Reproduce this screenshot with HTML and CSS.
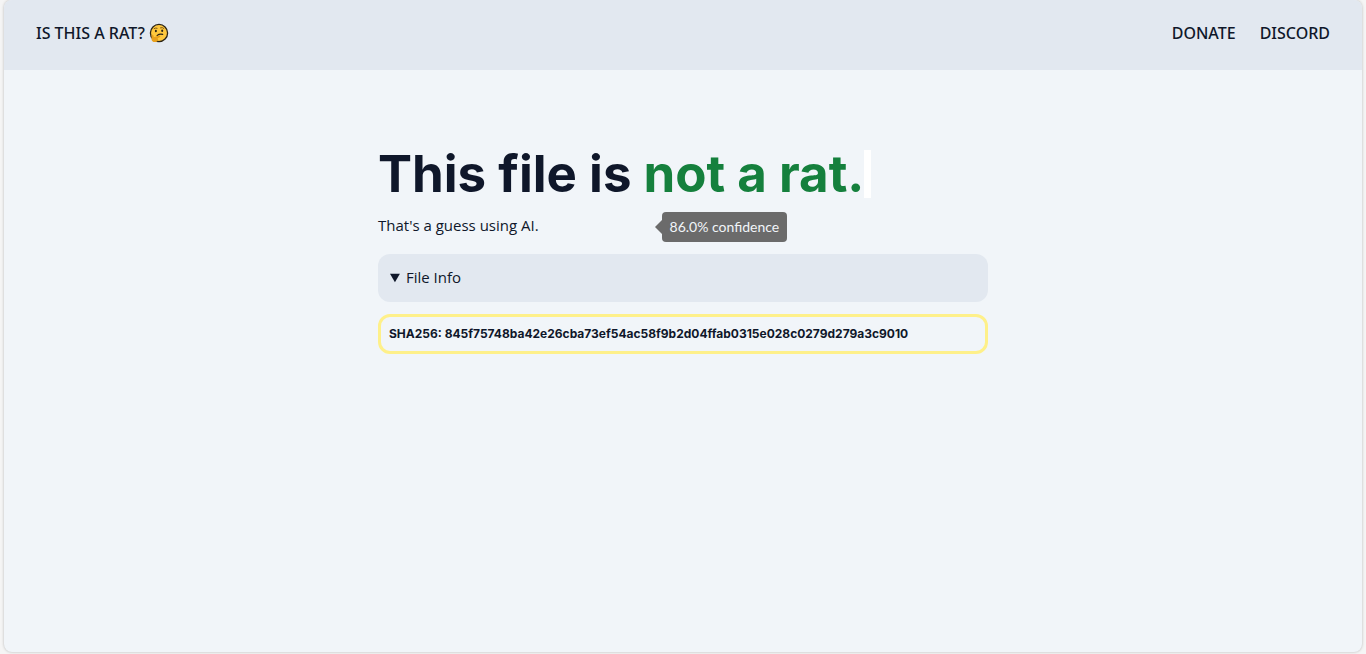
FILE: index.html
```html
<!DOCTYPE html>
<html lang="en">
<head>
<meta charset="utf-8">
<meta name="viewport" content="width=device-width, initial-scale=1">
<title>Is this a rat?</title>
<link rel="stylesheet" href="styles.css">
</head>
<body>
<div class="page">
  <header class="topbar">
    <a class="brand" href="#">IS THIS A RAT?
      <svg class="emoji" viewBox="0 0 20 20" role="img" aria-label="Thinking face">
        <circle cx="10" cy="10" r="8.6" fill="#ffc83d" stroke="#2b2417" stroke-width="1.3"/>
        <path d="M5.100 5.600q1.400-1 3-.4M11.500 4.800q2.200-.8 3.400.6" fill="none" stroke="#6b4a10" stroke-width=".9" stroke-linecap="round"/>
        <ellipse cx="6.900" cy="8" rx="1" ry="1.300" fill="#2b2417"/>
        <ellipse cx="13.200" cy="7.800" rx="1" ry="1.300" fill="#2b2417"/>
        <path d="M8.100 12.400q2.600-1.800 5.600-1" fill="none" stroke="#2b2417" stroke-width="1.200" stroke-linecap="round"/>
        <path d="M2.500 12.800c0-1.400 1.800-1.400 2 0l.3 1.400 5.200-1.600c1.400-.3 1.800 1.200.7 1.700l-2.200 1c1 .6.8 1.600.2 2.200-.3 1.200-1.300 1.600-2.600 1.600-2.400 0-3.600-1.200-3.600-3.200z" fill="#e8a01c"/>
      </svg>
    </a>
    <nav class="links">
      <a href="#donate">DONATE</a>
      <a href="#discord">DISCORD</a>
    </nav>
  </header>
  <main class="result">
    <h1 class="verdict">This file is <span class="rating" aria-describedby="confidence">not a rat.<span class="tooltip" id="confidence" role="tooltip">86.0% confidence</span></span><span class="caret"></span></h1>
    <p class="note">That's a guess using AI.</p>
    <details class="info" open>
      <summary class="info-title">File Info</summary>
      <p class="hash">SHA256: 845f75748ba42e26cba73ef54ac58f9b2d04ffab0315e028c0279d279a3c9010</p>
    </details>
  </main>
</div>
</body>
</html>
```
FILE: styles.css
```css
* {
  box-sizing: border-box;
}

body {
  margin: 0;
  min-height: 100vh;
  display: flex;
  padding: 0 4px 2px;
  background: #f5f5f5;
  color: #0f172a;
  font: 15px/24px "Open Sans", "Noto Sans", sans-serif;
}

.page {
  flex: 1;
  border-radius: 8px;
  overflow: hidden;
  background: #f1f5f9;
  box-shadow: 0 0 3px rgba(0, 0, 0, 0.25);
}

.topbar {
  display: flex;
  justify-content: space-between;
  align-items: center;
  padding: 21px 32px 25px;
  background: #e2e8f0;
  font: 500 16px/24px "Noto Sans", sans-serif;
}

.topbar a {
  color: inherit;
  text-decoration: none;
}

.brand {
  display: flex;
  align-items: center;
  gap: 4px;
}

.emoji {
  width: 20px;
  height: 20px;
}

.links {
  display: flex;
  gap: 24px;
}

.result {
  max-width: 642px;
  margin: 0 auto;
  padding: 80px 16px;
}

.verdict {
  margin: 0;
  font: 700 51px/48px Inter, sans-serif;
}

.rating {
  position: relative;
  color: #15803d;
}

.caret {
  display: inline-block;
  width: 7px;
  height: 48px;
  vertical-align: top;
  background: #ffffff;
}

.tooltip {
  position: absolute;
  top: 69px;
  left: 18px;
  padding: 0 8px;
  border-radius: 4px;
  background: #6b6b6b;
  color: #f1f5f9;
  font: 400 14px/30px Lato, sans-serif;
  white-space: nowrap;
}

.tooltip::before {
  content: "";
  position: absolute;
  top: 8px;
  left: -7px;
  border: 7px solid transparent;
  border-left-width: 0;
  border-right-color: #6b6b6b;
}

.note {
  margin: 15px 0 17px;
}

.info-title {
  padding: 11px 12px 13px;
  border-radius: 12px;
  background: #e2e8f0;
}

.hash {
  margin: 12px 0 0;
  padding: 8px;
  border: 3px solid #fef08a;
  border-radius: 12px;
  font: 700 12px/18px Inter, sans-serif;
  overflow-wrap: anywhere;
}
```
